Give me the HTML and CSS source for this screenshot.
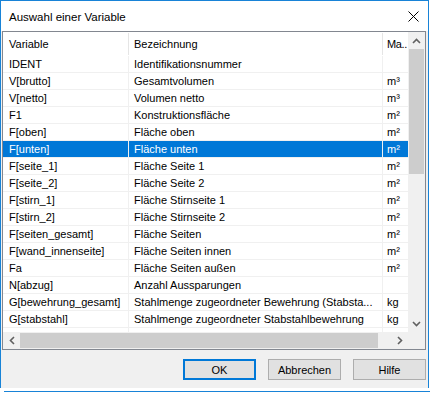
FILE: index.html
```html
<!DOCTYPE html>
<html lang="de">
<head>
  <meta charset="UTF-8">
  <title>Auswahl einer Variable</title>
  <link rel="stylesheet" href="styles.css">
</head>
<body>
  <div class="window">
    <div class="titlebar">
      <span class="title">Auswahl einer Variable</span>
      <svg class="close" width="11" height="11" viewBox="0 0 11 11">
        <path d="M0.5 0.5 L10.5 10.5 M10.5 0.5 L0.5 10.5" stroke="#000" stroke-width="1" fill="none"/>
      </svg>
    </div>

    <div class="content">
      <div class="list">
        <div class="view">
          <div class="row head">
            <div class="cell c1">Variable</div>
            <div class="cell c2">Bezeichnung</div>
            <div class="cell c3">Ma..</div>
          </div>
          <div class="row"><div class="cell c1">IDENT</div><div class="cell c2">Identifikationsnummer</div><div class="cell c3"></div></div>
          <div class="row"><div class="cell c1">V[brutto]</div><div class="cell c2">Gesamtvolumen</div><div class="cell c3">m³</div></div>
          <div class="row"><div class="cell c1">V[netto]</div><div class="cell c2">Volumen netto</div><div class="cell c3">m³</div></div>
          <div class="row"><div class="cell c1">F1</div><div class="cell c2">Konstruktionsfläche</div><div class="cell c3">m²</div></div>
          <div class="row"><div class="cell c1">F[oben]</div><div class="cell c2">Fläche oben</div><div class="cell c3">m²</div></div>
          <div class="row selected"><div class="cell c1">F[unten]</div><div class="cell c2">Fläche unten</div><div class="cell c3">m²</div></div>
          <div class="row"><div class="cell c1">F[seite_1]</div><div class="cell c2">Fläche Seite 1</div><div class="cell c3">m²</div></div>
          <div class="row"><div class="cell c1">F[seite_2]</div><div class="cell c2">Fläche Seite 2</div><div class="cell c3">m²</div></div>
          <div class="row"><div class="cell c1">F[stirn_1]</div><div class="cell c2">Fläche Stirnseite 1</div><div class="cell c3">m²</div></div>
          <div class="row"><div class="cell c1">F[stirn_2]</div><div class="cell c2">Fläche Stirnseite 2</div><div class="cell c3">m²</div></div>
          <div class="row"><div class="cell c1">F[seiten_gesamt]</div><div class="cell c2">Fläche Seiten</div><div class="cell c3">m²</div></div>
          <div class="row"><div class="cell c1">F[wand_innenseite]</div><div class="cell c2">Fläche Seiten innen</div><div class="cell c3">m²</div></div>
          <div class="row"><div class="cell c1">Fa</div><div class="cell c2">Fläche Seiten außen</div><div class="cell c3">m²</div></div>
          <div class="row"><div class="cell c1">N[abzug]</div><div class="cell c2">Anzahl Aussparungen</div><div class="cell c3"></div></div>
          <div class="row"><div class="cell c1">G[bewehrung_gesamt]</div><div class="cell c2">Stahlmenge zugeordneter Bewehrung (Stabsta...</div><div class="cell c3">kg</div></div>
          <div class="row"><div class="cell c1">G[stabstahl]</div><div class="cell c2">Stahlmenge zugeordneter Stabstahlbewehrung</div><div class="cell c3">kg</div></div>
          <div class="row"><div class="cell c1"></div><div class="cell c2"></div><div class="cell c3"></div></div>
        </div>

        <!-- vertical scrollbar -->
        <div class="vscroll">
          <div class="arrow">
            <svg width="9" height="6" viewBox="0 0 9 6"><path d="M1 5 L4.5 1.5 L8 5" stroke="#606060" stroke-width="1.6" fill="none"/></svg>
          </div>
          <div class="vthumb"></div>
          <div class="track"></div>
          <div class="arrow">
            <svg width="9" height="6" viewBox="0 0 9 6"><path d="M1 1 L4.5 4.5 L8 1" stroke="#606060" stroke-width="1.6" fill="none"/></svg>
          </div>
        </div>

        <!-- horizontal scrollbar -->
        <div class="hscroll">
          <div class="arrow">
            <svg width="6" height="9" viewBox="0 0 6 9"><path d="M5 1 L1.5 4.5 L5 8" stroke="#606060" stroke-width="1.6" fill="none"/></svg>
          </div>
          <div class="hthumb"></div>
          <div class="track"></div>
          <div class="arrow">
            <svg width="6" height="9" viewBox="0 0 6 9"><path d="M1 1 L4.5 4.5 L1 8" stroke="#606060" stroke-width="1.6" fill="none"/></svg>
          </div>
        </div>
        <div class="corner"></div>
      </div>

      <div class="buttons">
        <button class="btn default">OK</button>
        <button class="btn">Abbrechen</button>
        <button class="btn">Hilfe</button>
      </div>
    </div>
  </div>
  <div class="edge"></div>
</body>
</html>
```

FILE: styles.css
```css
body {
  margin: 0;
  background-color: #fff;
  font-family: "Liberation Sans", Arial, sans-serif;
  font-size: 11px;
  color: #000;
}
.window {
  width: 427px;
  border: 1px solid #1883d7;
  border-bottom: none;
}
.titlebar {
  height: 30px;
  background-color: #fff;
  display: flex;
  align-items: center;
  justify-content: space-between;
  padding: 0 9px 0 8px;
}
.title {
  font-size: 11.5px;
  margin-top: 1px;
}
.close {
  display: block;
}
.content {
  background-color: #f0f0f0;
  padding: 0 2px 8px 1px;
}
.list {
  height: 317px;
  border: 1px solid #828790;
  background-color: #fff;
  display: grid;
  grid-template-columns: 405px 17px;
  grid-template-rows: 300px 17px;
}
.view {
  overflow: hidden;
}
.row {
  display: flex;
  height: 16px;
  border-bottom: 1px solid #f0f0f0;
  line-height: 16px;
}
.row.head {
  height: 24px;
  line-height: 24px;
  border-bottom: none;
}
.cell {
  white-space: nowrap;
  overflow: hidden;
  border-right: 1px solid #f0f0f0;
  padding: 0 5px;
}
.head .cell {
  border-right-color: #e5e5e5;
  margin: 1px 0;
  line-height: 22px;
}
.c1 {
  width: 114px;
  padding-left: 6px;
  flex: none;
}
.c2 {
  width: 243px;
  flex: none;
}
.c3 {
  flex: 1;
  padding: 0 0 0 4px;
  border-right: none;
}
.head .c3 {
  letter-spacing: -0.4px;
}
.selected .cell {
  background-color: #0078d7;
  color: #fff;
}
.vscroll {
  background-color: #f0f0f0;
  display: flex;
  flex-direction: column;
}
.hscroll {
  background-color: #f0f0f0;
  display: flex;
}
.arrow {
  width: 17px;
  height: 17px;
  flex: none;
  display: flex;
  align-items: center;
  justify-content: center;
}
.vthumb {
  height: 125px;
  margin: 0 1px;
  background-color: #cdcdcd;
  flex: none;
}
.hthumb {
  width: 358px;
  margin: 1px 0;
  background-color: #cdcdcd;
  flex: none;
}
.track {
  flex: 1;
}
.corner {
  background-color: #f0f0f0;
}
.buttons {
  display: flex;
  justify-content: flex-end;
  gap: 12px;
  margin-top: 9px;
}
.btn {
  width: 73px;
  height: 21px;
  font-family: "Liberation Sans", Arial, sans-serif;
  font-size: 11px;
  color: #000;
  background-color: #e1e1e1;
  border: 1px solid #adadad;
  padding: 0;
}
.btn.default {
  border: 2px solid #0078d7;
}
.edge {
  height: 1px;
  margin: 3px 0 0 4px;
  background-color: #1883d7;
}
```
